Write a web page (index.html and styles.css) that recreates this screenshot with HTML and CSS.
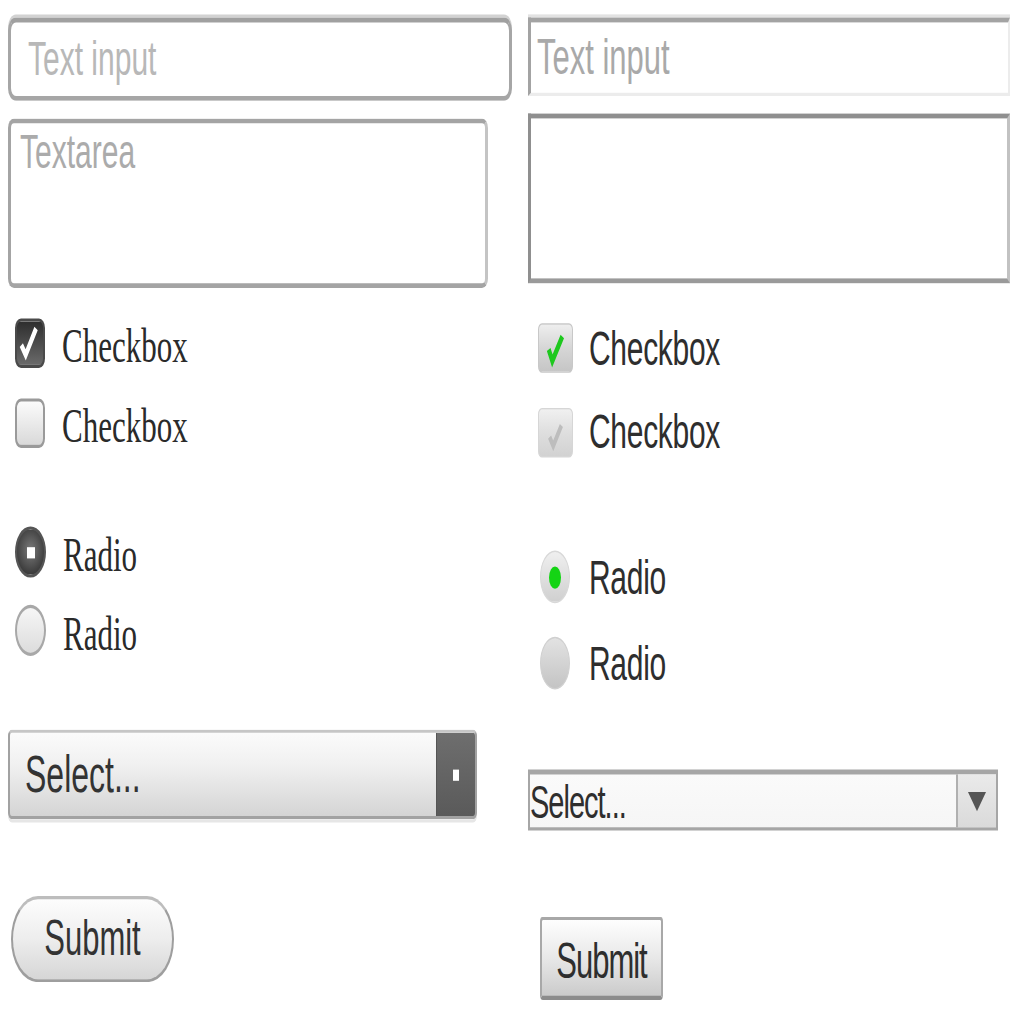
FILE: index.html
```html
<!DOCTYPE html>
<html lang="en">
<head>
<meta charset="utf-8">
<title>Form controls</title>
<link rel="stylesheet" href="styles.css">
</head>
<body>
<div class="page">
  <div class="col col-left">
    <input class="l-input" type="text" placeholder="Text input">
    <textarea class="l-area" placeholder="Textarea"></textarea>

    <div class="row l-row r1">
      <span class="l-check checked"><svg viewBox="0 0 30 32" width="26" height="28"><polyline points="5,18 10,25 22,6" fill="none" stroke="#fff" stroke-width="4.5"/></svg></span>
      <span class="l-label">Checkbox</span>
    </div>
    <div class="row l-row r2">
      <span class="l-check"></span>
      <span class="l-label">Checkbox</span>
    </div>
    <div class="row l-row r3">
      <span class="l-radio checked"><span class="l-dot"></span></span>
      <span class="l-label">Radio</span>
    </div>
    <div class="row l-row r4">
      <span class="l-radio"></span>
      <span class="l-label">Radio</span>
    </div>

    <div class="l-select">
      <span class="l-select-text">Select...</span>
      <span class="l-select-btn"><span class="l-select-mark"></span></span>
    </div>

    <button class="l-submit" type="button">Submit</button>
  </div>

  <div class="col col-right">
    <input class="r-input" type="text" placeholder="Text input">
    <textarea class="r-area"></textarea>

    <div class="row r-row q1">
      <span class="r-check"><svg viewBox="0 0 33 32" width="33" height="32"><polyline points="9,17 13,25 24,8" fill="none" stroke="#1ec81e" stroke-width="4.5"/></svg></span>
      <span class="r-label">Checkbox</span>
    </div>
    <div class="row r-row q2">
      <span class="r-check disabled"><svg viewBox="0 0 33 32" width="33" height="32"><polyline points="10,19 14,25 23,11" fill="none" stroke="#bdbdbd" stroke-width="4"/></svg></span>
      <span class="r-label">Checkbox</span>
    </div>
    <div class="row r-row q3">
      <span class="r-radio"><span class="r-dot"></span></span>
      <span class="r-label">Radio</span>
    </div>
    <div class="row r-row q4">
      <span class="r-radio disabled"></span>
      <span class="r-label">Radio</span>
    </div>

    <div class="r-select">
      <span class="r-select-text">Select...</span>
      <span class="r-select-btn"><span class="r-arrow"></span></span>
    </div>

    <button class="r-submit" type="button">Submit</button>
  </div>
</div>
</body>
</html>
```

FILE: styles.css
```css
html, body {
  margin: 0;
  padding: 0;
  background: #fff;
}

body {
  width: 1024px;
  height: 1024px;
  overflow: hidden;
}

.page {
  display: grid;
  grid-template-columns: 520px 504px;
  width: 1024px;
  height: 640px;
  transform: scaleY(1.6);
  transform-origin: 0 0;
  font-family: "Liberation Sans", Arial, sans-serif;
  color: #333;
}

.col {
  display: flex;
  flex-direction: column;
  align-items: flex-start;
  padding-left: 8px;
}

/* ---------- left column ---------- */
.l-input {
  box-sizing: border-box;
  margin: 11px 0 0;
  width: 504px;
  height: 52px;
  border: 3px solid #a6a6a6;
  border-top-color: #a0a0a0;
  border-radius: 8px;
  box-shadow: 0 -2px 0 #d2d2d2;
  padding: 0 0 0 17px;
  font: 30px "Liberation Sans", Arial, sans-serif;
  color: #333;
  background: #fff;
  outline: none;
}
.l-input::placeholder { color: #b8b8b8; }

.l-area {
  box-sizing: border-box;
  margin: 11px 0 0;
  width: 480px;
  height: 106px;
  border: 3px solid #a4a4a4;
  border-right-color: #c4c4c4;
  border-radius: 6px;
  padding: 1px 9px;
  font: 30px/1.15 "Liberation Sans", Arial, sans-serif;
  resize: none;
  background: #fff;
  outline: none;
}
.l-area::placeholder { color: #ababab; }

.row {
  display: flex;
  align-items: center;
}

.l-row { height: 32px; margin-left: 7px; gap: 17px; }
.r1 { margin-top: 18px; }
.r2 { margin-top: 18px; }
.r3 { margin-top: 49px; }
.r4 { margin-top: 17px; }

.l-label {
  font: 31px "Liberation Serif", "Times New Roman", serif;
  color: #2a2a2a;
  line-height: 32px;
  padding-top: 4px;
}

.l-check {
  box-sizing: border-box;
  width: 30px;
  height: 31px;
  border: 2px solid #9a9a9a;
  border-radius: 6px;
  background: linear-gradient(#fbfbfb, #d9d9d9);
  display: flex;
  align-items: center;
  justify-content: center;
}
.l-check.checked {
  border-color: #4a4a4a;
  background: linear-gradient(#2e2e2e, #6a6a6a);
}

.l-radio {
  box-sizing: border-box;
  width: 31px;
  height: 32px;
  border: 2px solid #a8a8a8;
  border-radius: 50%;
  background: linear-gradient(#f6f6f6, #dcdcdc);
  display: flex;
  align-items: center;
  justify-content: center;
}
.l-radio.checked {
  border-color: #555;
  background: radial-gradient(circle at 50% 45%, #7a7a7a, #3a3a3a 75%);
}
.l-dot {
  width: 8px;
  height: 7px;
  background: #fff;
}

.l-select {
  box-sizing: border-box;
  margin-top: 46px;
  width: 469px;
  height: 56px;
  display: flex;
  align-items: stretch;
  border: 2px solid #a2a2a2;
  border-top-color: #c6c6c6;
  border-radius: 4px;
  background: linear-gradient(#fbfbfb, #f0f0f0 40%, #d4d4d4);
  box-shadow: 0 2px 0 #e6e6e6;
  overflow: hidden;
}
.l-select-text {
  flex: 1;
  display: flex;
  align-items: center;
  padding-left: 15px;
  font-size: 32px;
  color: #333;
}
.l-select-btn {
  width: 38px;
  background: linear-gradient(#6e6e6e, #5a5a5a);
  border-left: 1px solid #555;
  display: flex;
  align-items: center;
  justify-content: center;
}
.l-select-mark {
  width: 6px;
  height: 7px;
  background: #fff;
}

.l-submit {
  box-sizing: border-box;
  margin: 48px 0 0 3px;
  width: 163px;
  height: 54px;
  border: 2px solid #9e9e9e;
  border-top-color: #bdbdbd;
  border-radius: 27px;
  background: linear-gradient(#fdfdfd, #ededed 50%, #d6d6d6);
  font: 31px "Liberation Sans", Arial, sans-serif;
  color: #333;
  padding: 0;
}

/* ---------- right column ---------- */
.r-input {
  box-sizing: border-box;
  margin: 11px 0 0;
  width: 482px;
  height: 49px;
  border: 2px solid #ececec;
  border-top: 3px solid #a3a3a3;
  border-left: 3px solid #a3a3a3;
  box-shadow: 0 -2px 0 #e2e2e2;
  padding: 0 0 0 6px;
  font: 31px "Liberation Sans", Arial, sans-serif;
  background: #fff;
  outline: none;
}
.r-input::placeholder { color: #a9a9a9; }

.r-area {
  box-sizing: border-box;
  margin: 11px 0 0;
  width: 482px;
  height: 106px;
  border: 3px solid #8f8f8f;
  border-right-color: #c2c2c2;
  border-bottom-color: #9a9a9a;
  border-radius: 0;
  resize: none;
  background: #fff;
  outline: none;
}

.r-row { margin-left: 10px; gap: 16px; }
.q1 { margin-top: 25px; height: 31px; }
.q2 { margin-top: 21px; height: 32px; }
.q3 { margin-top: 58px; height: 33px; margin-left: 12px; gap: 19px; }
.q4 { margin-top: 21px; height: 33px; margin-left: 12px; gap: 19px; }

.r-label {
  font: 30px "Liberation Sans", Arial, sans-serif;
  color: #2e2e2e;
  letter-spacing: -0.3px;
}

.r-check {
  box-sizing: border-box;
  width: 35px;
  height: 31px;
  border: 1px solid #c8c8c8;
  border-radius: 4px;
  background: linear-gradient(#eeeeee, #d6d6d6 50%, #c6c6c6);
  display: flex;
  align-items: center;
  justify-content: center;
}
.r-check svg { width: 33px; height: 29px; }
.r-check.disabled {
  border-color: #d6d6d6;
  background: linear-gradient(#f0f0f0, #dedede 50%, #d2d2d2);
}

.r-radio {
  box-sizing: border-box;
  width: 30px;
  height: 33px;
  border: 1px solid #d8d8d8;
  border-radius: 50%;
  background: linear-gradient(#efefef, #d0d0d0);
  display: flex;
  align-items: center;
  justify-content: center;
}
.r-radio.disabled {
  border-color: #d0d0d0;
  background: linear-gradient(#e2e2e2, #c4c4c4);
}
.r-dot {
  width: 12px;
  height: 14px;
  border-radius: 50%;
  background: #14d414;
}

.r-select {
  box-sizing: border-box;
  margin-top: 50px;
  width: 470px;
  height: 38px;
  display: flex;
  align-items: stretch;
  border: 2px solid #a6a6a6;
  border-top-width: 3px;
  background: linear-gradient(#fafafa, #f6f6f6);
}
.r-select-text {
  flex: 1;
  display: flex;
  align-items: center;
  font-size: 29px;
  color: #2e2e2e;
  letter-spacing: -1px;
  padding-top: 2px;
}
.r-select-btn {
  width: 38px;
  border-left: 2px solid #b0b0b0;
  background: linear-gradient(#eaeaea, #dadada);
  display: flex;
  align-items: center;
  justify-content: center;
}
.r-arrow {
  width: 0;
  height: 0;
  border-left: 9px solid transparent;
  border-right: 9px solid transparent;
  border-top: 12px solid #555;
}

.r-submit {
  box-sizing: border-box;
  margin: 54px 0 0 12px;
  width: 123px;
  height: 52px;
  border: 2px solid #a8a8a8;
  border-bottom: 3px solid #8c8c8c;
  border-radius: 3px;
  background: linear-gradient(#fefefe, #e8e8e8 50%, #cbcbcb);
  font: 31px "Liberation Sans", Arial, sans-serif;
  color: #2e2e2e;
  padding: 4px 0 0;
  letter-spacing: -1px;
}
```
